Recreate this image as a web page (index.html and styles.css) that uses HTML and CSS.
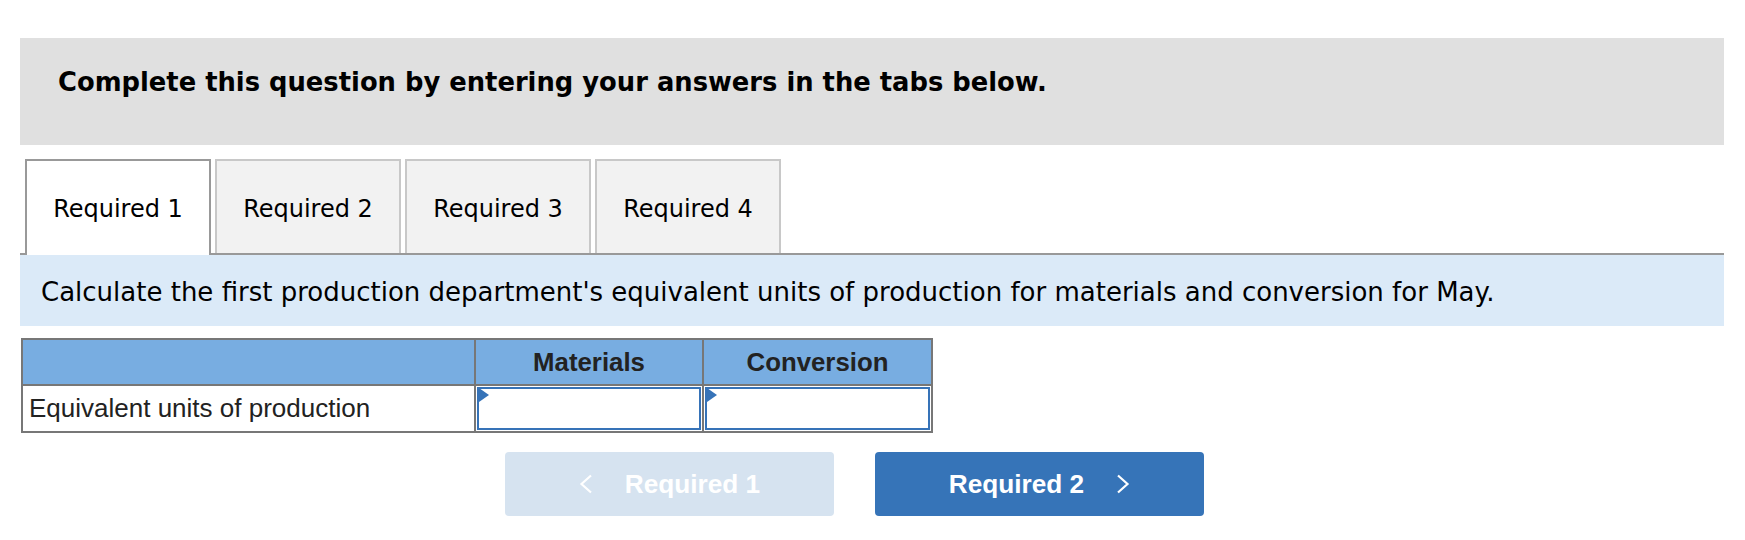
FILE: index.html
```html
<!DOCTYPE html>
<html lang="en">
<head>
<meta charset="utf-8">
<title>Required 1</title>
<link rel="stylesheet" href="styles.css">
</head>
<body>
<div class="page">
  <div class="prompt">
    <p class="prompt-text">Complete this question by entering your answers in the tabs below.</p>
  </div>

  <div class="tabs">
    <div class="tab active">Required 1</div>
    <div class="tab">Required 2</div>
    <div class="tab">Required 3</div>
    <div class="tab">Required 4</div>
  </div>

  <div class="instructions">Calculate the first production department's equivalent units of production for materials and conversion for May.</div>

  <table class="grid">
    <thead>
      <tr>
        <th class="col-label"></th>
        <th class="col-mat">Materials</th>
        <th class="col-conv">Conversion</th>
      </tr>
    </thead>
    <tbody>
      <tr>
        <td class="label">Equivalent units of production</td>
        <td class="cell"><div class="input"><span class="flag"></span></div></td>
        <td class="cell"><div class="input"><span class="flag"></span></div></td>
      </tr>
    </tbody>
  </table>

  <div class="nav">
    <button class="btn prev" type="button">
      <svg class="chev" viewBox="0 0 14 20" width="14" height="20"><path d="M12 1.5 L2.5 10 L12 18.5" fill="none" stroke="currentColor" stroke-width="2.2"/></svg>
      <span class="btn-label">Required 1</span>
    </button>
    <button class="btn next" type="button">
      <span class="btn-label">Required 2</span>
      <svg class="chev" viewBox="0 0 14 20" width="14" height="20"><path d="M2 1.5 L11.5 10 L2 18.5" fill="none" stroke="currentColor" stroke-width="2.2"/></svg>
    </button>
  </div>
</div>
</body>
</html>
```

FILE: styles.css
```css
html, body {
  margin: 0;
  padding: 0;
  background: #ffffff;
}

.page {
  padding: 38px 21px 0 20px;
  font-family: "DejaVu Sans", Verdana, sans-serif;
  color: #000;
}

.prompt {
  background: #e0e0e0;
  height: 107px;
  box-sizing: border-box;
  padding: 29px 0 0 38px;
}

.prompt-text {
  margin: 0;
  font-weight: bold;
  font-size: 25.8px;
  line-height: 30px;
}

.tabs {
  display: flex;
  gap: 4px;
  margin-top: 14px;
  padding-left: 5px;
  border-bottom: 2px solid #999;
  height: 94px;
}

.tab {
  width: 186px;
  box-sizing: border-box;
  border: 2px solid #c8c8c8;
  border-bottom: none;
  background: #f2f2f2;
  display: flex;
  align-items: center;
  justify-content: center;
  font-size: 24px;
  padding-top: 3px;
}

.tab.active {
  background: #fff;
  border-color: #999;
  height: 96px;
  margin-bottom: -2px;
  padding-top: 1px;
}

.instructions {
  background: #dbeaf8;
  height: 71px;
  box-sizing: border-box;
  padding: 22px 0 0 21px;
  font-size: 26px;
  line-height: 30px;
}

.grid {
  margin: 12px 0 0 1px;
  border-collapse: collapse;
  border: 2px solid #777;
  font-family: "Liberation Sans", Arial, sans-serif;
}

.grid th {
  background: #78ade1;
  border: 2px solid #777;
  height: 44px;
  padding: 0;
  font-size: 25.8px;
  font-weight: bold;
  color: #222;
  text-align: center;
}

.col-label { width: 451px; }
.col-mat { width: 226px; }
.col-conv { width: 227px; }

.grid td {
  border: 2px solid #777;
  padding: 0;
  height: 44px;
}

.grid td.label {
  font-size: 26px;
  color: #222;
  padding-left: 6px;
}

.grid td.cell {
  padding: 1px 1px 0 1px;
  vertical-align: top;
}

.input {
  position: relative;
  height: 43px;
  border: 2px solid #3673b8;
  box-sizing: border-box;
  background: #fff;
}

.flag {
  position: absolute;
  left: 0;
  top: -1px;
  width: 0;
  height: 0;
  border-top: 7px solid transparent;
  border-bottom: 7px solid transparent;
  border-left: 10px solid #3673b8;
}

.nav {
  display: flex;
  gap: 41px;
  margin: 19px 0 0 485px;
}

.btn {
  width: 329px;
  height: 64px;
  border: none;
  border-radius: 4px;
  display: flex;
  align-items: center;
  justify-content: center;
  gap: 32px;
  color: #fff;
  font-family: "Liberation Sans", Arial, sans-serif;
  font-weight: bold;
  font-size: 26.2px;
  padding: 0;
}

.btn.prev {
  background: #d6e3f0;
}

.btn.next {
  background: #3674b8;
}

.chev {
  display: block;
}
```
